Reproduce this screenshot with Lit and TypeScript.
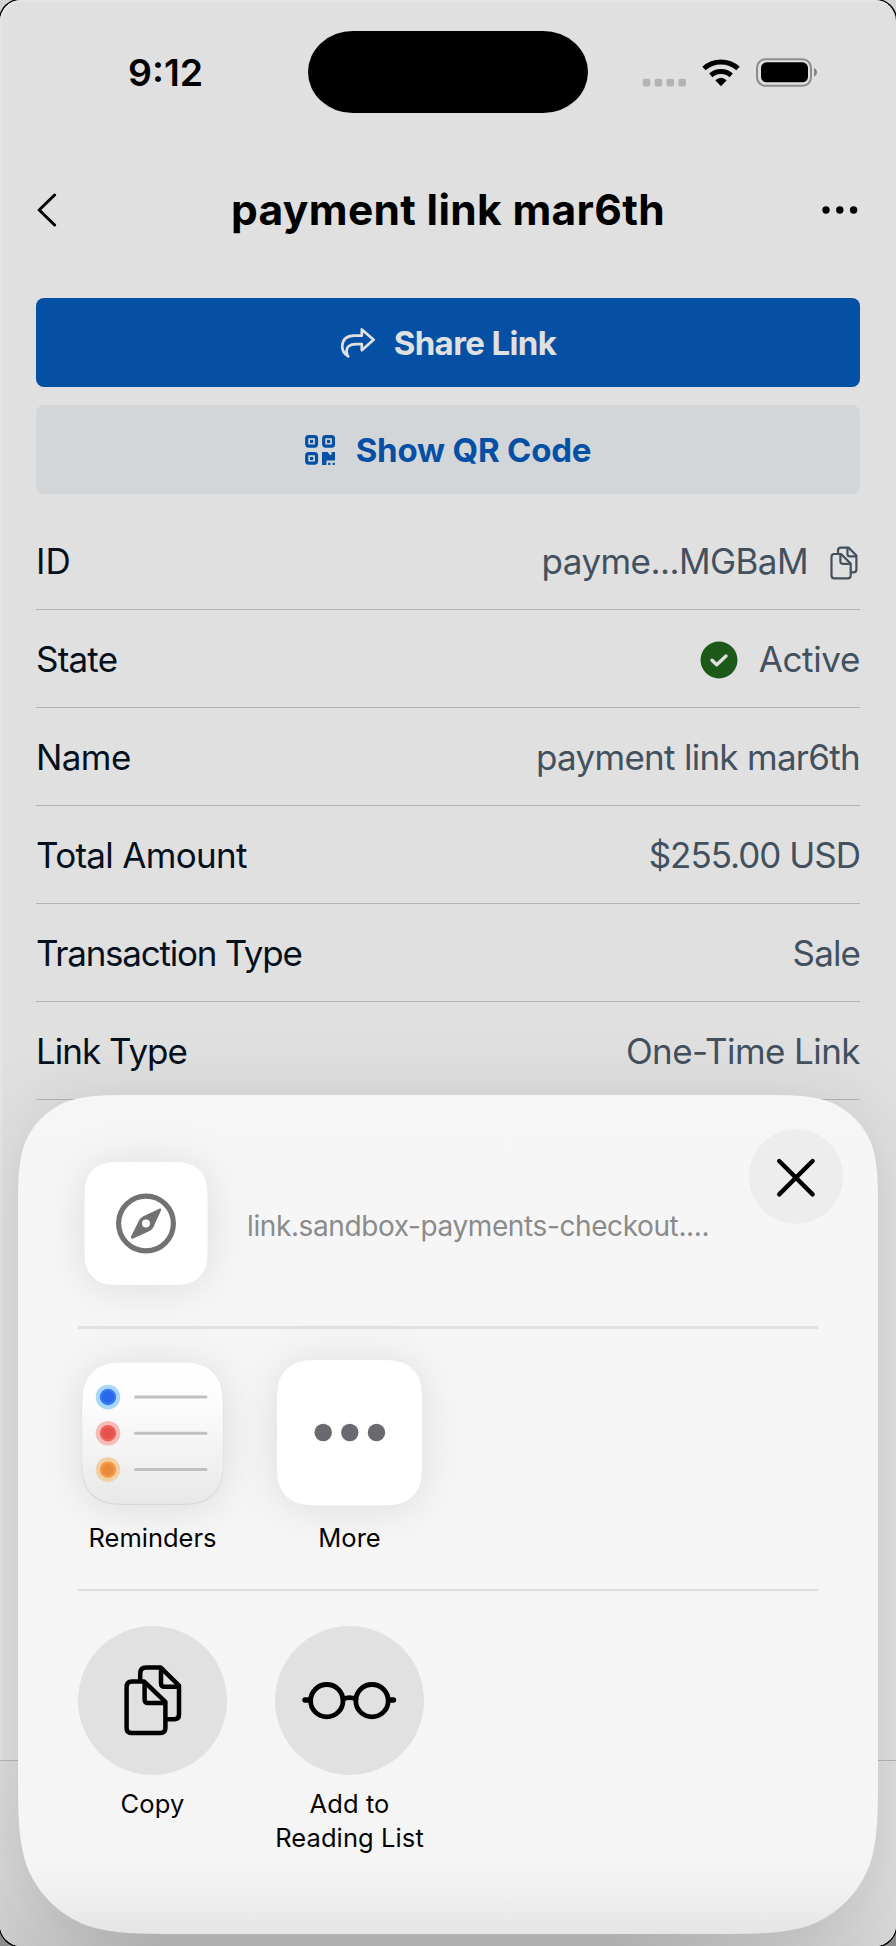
import { LitElement, html, svg, css } from "lit";
import { customElement } from "lit/decorators.js";

// Rounded rectangle whose corners ease into the straight edges.
function smoothRect(x: number, y: number, w: number, h: number, rt: number, rb = rt): string {
  const A = 1.52866, B = 1.08849, C = 0.86841, D = 0.63149, E = 0.07491, F = 0.37282, G = 0.16906;
  const r = x + w, b = y + h;
  return [
    `M${x + A * rt} ${y}H${r - A * rt}`,
    `C${r - B * rt} ${y} ${r - C * rt} ${y} ${r - D * rt} ${y + E * rt}`,
    `C${r - F * rt} ${y + G * rt} ${r - G * rt} ${y + F * rt} ${r - E * rt} ${y + D * rt}`,
    `C${r} ${y + C * rt} ${r} ${y + B * rt} ${r} ${y + A * rt}`,
    `V${b - A * rb}`,
    `C${r} ${b - B * rb} ${r} ${b - C * rb} ${r - E * rb} ${b - D * rb}`,
    `C${r - G * rb} ${b - F * rb} ${r - F * rb} ${b - G * rb} ${r - D * rb} ${b - E * rb}`,
    `C${r - C * rb} ${b} ${r - B * rb} ${b} ${r - A * rb} ${b}`,
    `H${x + A * rb}`,
    `C${x + B * rb} ${b} ${x + C * rb} ${b} ${x + D * rb} ${b - E * rb}`,
    `C${x + F * rb} ${b - G * rb} ${x + G * rb} ${b - F * rb} ${x + E * rb} ${b - D * rb}`,
    `C${x} ${b - C * rb} ${x} ${b - B * rb} ${x} ${b - A * rb}`,
    `V${y + A * rt}`,
    `C${x} ${y + B * rt} ${x} ${y + C * rt} ${x + E * rt} ${y + D * rt}`,
    `C${x + G * rt} ${y + F * rt} ${x + F * rt} ${y + G * rt} ${x + D * rt} ${y + E * rt}`,
    `C${x + C * rt} ${y} ${x + B * rt} ${y} ${x + A * rt} ${y}Z`,
  ].join("");
}

const copyIcon = html`<svg width="28" height="34" viewBox="0 0 28 34" fill="none" stroke="#43515f" stroke-width="2.2" stroke-linejoin="round">
  <path d="M8 7V4.5Q8 1.6 11 1.6H18.5L26.4 9.5V23.5Q26.4 26.3 23.5 26.3H21"/>
  <path d="M17.5 1.6V8Q17.5 10.3 19.8 10.3H26.4"/>
  <path d="M4.2 8H11L20.7 17.6V29.5Q20.7 32.4 17.8 32.4H4.4Q1.5 32.4 1.5 29.5V10.8Q1.5 8 4.2 8Z"/>
  <path d="M10.4 8V15.6Q10.4 17.8 12.6 17.8H20.7"/>
</svg>`;

const checkIcon = html`<svg width="38" height="38" viewBox="0 0 38 38">
  <circle cx="19" cy="19" r="18.5" fill="#1d5a1a"/>
  <path d="M12 19.3L16.7 23.8L26 15" fill="none" stroke="#e0e0e0" stroke-width="3.4" stroke-linecap="round" stroke-linejoin="round"/>
</svg>`;

const finder = (x: number, y: number) => svg`
  <rect x=${x + 1.7} y=${y + 1.7} width="9.8" height="9.4" rx="2" fill="none" stroke="#0550a5" stroke-width="3.2"/>
  <rect x=${x + 5} y=${y + 4.9} width="3.2" height="3.2" fill="#0550a5"/>`;

interface Detail {
  label: string;
  value: string;
  kind?: "copy" | "state";
  labelTrack: number;
  valueTrack: number;
}

const details: Detail[] = [
  { label: "ID", value: "payme...MGBaM", kind: "copy", labelTrack: 0.2, valueTrack: -0.57 },
  { label: "State", value: "Active", kind: "state", labelTrack: -0.8, valueTrack: -0.35 },
  { label: "Name", value: "payment link mar6th", labelTrack: -0.6, valueTrack: -0.72 },
  { label: "Total Amount", value: "$255.00 USD", labelTrack: -0.7, valueTrack: -1 },
  { label: "Transaction Type", value: "Sale", labelTrack: -1.25, valueTrack: -0.9 },
  { label: "Link Type", value: "One-Time Link", labelTrack: -1, valueTrack: -0.57 },
];

@customElement("detail-row")
class DetailRow extends LitElement {
  static properties = { detail: { attribute: false } };
  declare detail: Detail;
  static styles = css`
    :host { display: flex; box-sizing: border-box; height: 98px; align-items: center; justify-content: space-between;
      border-bottom: 1px solid #b3b3b3; font-size: 35px; color: #06101d; white-space: nowrap; }
    .value { display: flex; align-items: center; color: #43515f; }
    .check { display: flex; margin: 3px 21px 0 0; }
    .copy { display: flex; margin: 4px 2px 0 22px; }
  `;
  render() {
    const d = this.detail;
    return html`<span style="letter-spacing:${d.labelTrack}px">${d.label}</span>
      <span class="value">
        ${d.kind === "state" ? html`<span class="check">${checkIcon}</span>` : ""}
        <span style="letter-spacing:${d.valueTrack}px">${d.value}</span>
        ${d.kind === "copy" ? html`<span class="copy">${copyIcon}</span>` : ""}
      </span>`;
  }
}

@customElement("share-sheet")
class ShareSheet extends LitElement {
  static styles = css`
    :host { display: block; position: relative; width: 860px; height: 839px; color: #050505; }
    .bg { position: absolute; left: 0; top: 0; overflow: visible; filter: drop-shadow(0 6px 34px rgba(30, 20, 20, 0.13)); }
    svg { display: block; overflow: visible; }
    .body { position: relative; display: flex; flex-direction: column; padding: 0 60px; }
    .head { display: flex; height: 231px; align-items: flex-start; border-bottom: 3px solid #e1e1e1; }
    .thumb { margin: 67px 0 0 6px; }
    .soft { filter: drop-shadow(0 2px 20px rgba(0, 0, 0, 0.1)); }
    .url { margin: 114px 0 0 39px; width: 470px; line-height: 34px; font-size: 28px; color: #8b8b8b; letter-spacing: -0.39px; white-space: nowrap; }
    .close { margin: 34px -26px 0 auto; }
    .row { display: flex; gap: 48px; }
    .apps { height: 229px; padding-top: 31px; border-bottom: 2px solid #dedede; }
    .actions { padding-top: 35px; }
    .item { width: 149px; display: flex; flex-direction: column; align-items: center; font-size: 25.5px; line-height: 34.5px; text-align: center; white-space: nowrap; }
    .apps .label { margin-top: 16px; }
    .actions .label { margin-top: 12px; letter-spacing: 0.1px; line-height: 34px; }
  `;
  render() {
    return html`
      <svg class="bg" width="860" height="839">
        <defs><linearGradient id="s" x1="0" y1="0" x2="0" y2="1">
          <stop offset="0" stop-color="#f6f6f6"/><stop offset="0.91" stop-color="#f5f5f5"/>
          <stop offset="0.95" stop-color="#f0f0f0"/><stop offset="1" stop-color="#e5e5e5"/>
        </linearGradient></defs>
        <path d=${smoothRect(0, 0, 860, 839, 80, 110)} fill="url(#s)"/>
      </svg>
      <div class="body">
        <div class="head">
          <svg class="thumb" width="124" height="124">
            <path class="soft" d=${smoothRect(0.5, 0, 123, 123, 28)} fill="#fff"/>
            <circle cx="62" cy="61.5" r="27.4" fill="none" stroke="#727272" stroke-width="5.2"/>
            <path fill="#727272" fill-rule="evenodd" d="M75.3 46.7Q77.8 46 77 48.6L71 61.5Q69.3 67.5 64.5 69.6L49.2 76.5Q46.2 77.3 47 74.6L54 60.5Q55.3 56.3 58.8 54.4ZM62 57.6A4 4 0 1 0 62 65.6A4 4 0 1 0 62 57.6Z"/>
          </svg>
          <span class="url">link.sandbox-payments-checkout....</span>
          <svg class="close" width="95" height="95">
            <circle cx="47" cy="47.5" r="47.2" fill="#ededed"/>
            <path d="M30.2 32L63.6 65.4M63.6 32L30.2 65.4" stroke="#000" stroke-width="4.4" stroke-linecap="round"/>
          </svg>
        </div>
        <div class="row apps">
          <div class="item">
            <svg width="145" height="145">
              <defs><linearGradient id="r" x1="0" y1="0" x2="0" y2="1">
                <stop offset="0" stop-color="#fff"/><stop offset="0.3" stop-color="#fcfcfc"/><stop offset="1" stop-color="#e8e8e8"/>
              </linearGradient></defs>
              <path class="soft" d=${smoothRect(1.6, 3, 141.8, 142, 34)} fill="#d9d9d9"/>
              <path d=${smoothRect(2.1, 2.6, 140.8, 141.2, 34)} fill="url(#r)"/>
              ${[["#a9d7fb", "#3478f6", "#2b67ea"], ["#f5bcb8", "#ee6359", "#e4534a"], ["#f1d0a4", "#f09a48", "#e98a3b"]].map(
                ([halo, ring, core], i) => svg`
                <circle cx="28" cy=${37 + i * 36.3} r="12.3" fill=${halo}/>
                <circle cx="28" cy=${37 + i * 36.3} r="8.2" fill=${ring}/>
                <circle cx="28" cy=${37 + i * 36.3} r="5.8" fill=${core}/>
                <path d="M55.5 ${37 + i * 36.3}H126" stroke="#c0c0c0" stroke-width="3" stroke-linecap="round"/>`
              )}
            </svg>
            <span class="label">Reminders</span>
          </div>
          <div class="item">
            <svg width="145" height="145">
              <path class="soft" d=${smoothRect(0, 0, 145, 145.5, 32)} fill="#fff"/>
              ${[46.2, 72.8, 99.5].map((x) => svg`<circle cx=${x} cy="72.5" r="8.7" fill="#6a6970"/>`)}
            </svg>
            <span class="label">More</span>
          </div>
        </div>
        <div class="row actions">
          <div class="item">
            <svg width="149" height="149">
              <circle cx="74.5" cy="74.5" r="74.5" fill="#e1e1e1"/>
              <g fill="none" stroke="#000" stroke-width="4.5" stroke-linejoin="round">
                <path d="M62.2 54V47.4Q62.2 41.4 68.2 41.4H82.5L101 59.6V88.5Q101 93.2 96.3 93.2H89"/>
                <path d="M83 41.6V57.2Q83 60.7 86.5 60.7H100"/>
                <path d="M54 55.4H66L87.4 75.8V102Q87.4 107 82.4 107H53.3Q48.6 107 48.6 102V61Q48.6 55.4 54 55.4Z"/>
                <path d="M66.6 56V73.5Q66.6 77 70.1 77H87"/>
              </g>
            </svg>
            <span class="label">Copy</span>
          </div>
          <div class="item">
            <svg width="149" height="149">
              <circle cx="74.5" cy="74.5" r="74.5" fill="#e1e1e1"/>
              <g fill="none" stroke="#000" stroke-width="4.8" stroke-linecap="round">
                <circle cx="51.8" cy="74.7" r="16.2"/><circle cx="97" cy="74.7" r="16.2"/>
                <path d="M68 73Q74.5 70.3 81 73"/>
                <path d="M30 74H35M114 74H118.5" stroke-width="5.4"/>
              </g>
            </svg>
            <span class="label">Add to<br>Reading List</span>
          </div>
        </div>
      </div>`;
  }
}

@customElement("app-root")
class AppRoot extends LitElement {
  static styles = css`
    :host { display: block; position: relative; width: 896px; height: 1946px; overflow: hidden;
      background: linear-gradient(#d4d4d4 50%, #8c8c8c);
      font-family: Inter, "Liberation Sans", sans-serif; }
    svg { display: block; }
    .screen { box-sizing: border-box; width: 896px; height: 1946px; background: #e0e0e0; border-radius: 21px; overflow: hidden;
      box-shadow: 0 0 0 1.5px #000, inset 2px 2px 0 #e5e5e5; }
    .status { height: 144px; display: grid; grid-template-columns: 308px 280px 1fr; }
    .time { padding-left: 128px; line-height: 146px; font-size: 37.5px; font-weight: 600; }
    .island { height: 82px; margin-top: 31px; background: #000; border-radius: 45px / 41px; }
    .signals { display: flex; padding: 57px 0 0 54px; }
    .header { height: 131px; display: grid; grid-template-columns: 1fr auto 1fr; align-items: center; padding: 0 36px 0 36px; }
    .title { font-size: 42.5px; font-weight: 700; letter-spacing: 0.33px; white-space: nowrap; color: #000; }
    .dots { justify-self: end; }
    .content { display: flex; flex-direction: column; padding: 23px 36px 0; }
    .btn { display: flex; height: 89px; border-radius: 8px; margin-bottom: 18px; align-items: center; justify-content: center;
      font-size: 33px; font-weight: 700; white-space: nowrap; }
    .primary { background: #0550a5; color: #e0e0e0; gap: 19px; letter-spacing: -0.6px; }
    .secondary { background: #d2d6d9; color: #0550a5; gap: 21px; letter-spacing: -0.2px; }
    .footer { position: absolute; left: 0; right: 0; top: 1760px; height: 186px; border-top: 1px solid #b5b5b5; box-sizing: border-box;
      background: linear-gradient(90deg, rgba(222,222,222,.5), rgba(190,190,190,0) 18%, rgba(190,190,190,0) 68%, rgba(226,226,226,.7)),
        linear-gradient(#dadada, #cdcdcd 60%, #b9b9b9); border-radius: 0 0 21px 21px; }
    .sheet { position: absolute; left: 18px; top: 1095px; }
  `;
  render() {
    return html`
      <div class="screen">
        <div class="status">
          <div class="time">9:12</div>
          <div class="island"></div>
          <div class="signals">
            <svg width="180" height="32" viewBox="642 57 180 32">
              ${[642.7, 654.6, 666.5, 678.4].map((x) => svg`<rect x=${x} y="78.8" width="7.6" height="7.6" rx="2.2" fill="#b3b3b3"/>`)}
              <g fill="none" stroke="#000" stroke-width="5">
                <path d="M704 68.5A25.5 25.5 0 0 1 738 68.5"/>
                <path d="M710.8 75.3A15.5 15.5 0 0 1 731.2 75.3"/>
              </g>
              <path d="M721 86.2L715.3 80.3Q721 75.2 726.7 80.3Z"/>
              <rect x="757" y="59.2" width="54" height="26.6" rx="8.5" fill="none" stroke="#8c8c8c" stroke-width="2"/>
              <rect x="761" y="62.3" width="47" height="20" rx="5.5"/>
              <path d="M814 68Q817 69.3 817 72.2T814 76.4Z" fill="#858585"/>
            </svg>
          </div>
        </div>
        <div class="header">
          <svg width="22" height="34"><path d="M18.6 2L3.2 17L18.6 32" fill="none" stroke="#000" stroke-width="3" stroke-linecap="round" stroke-linejoin="round"/></svg>
          <span class="title">payment link mar6th</span>
          <svg class="dots" width="40" height="10"><circle cx="6" cy="5" r="3.7"/><circle cx="19.8" cy="5" r="3.7"/><circle cx="33.6" cy="5" r="3.7"/></svg>
        </div>
        <div class="content">
          <div class="btn primary">
            <svg width="35" height="32" viewBox="340 328 35 32" fill="none" stroke="#e0e0e0" stroke-width="2.7" stroke-linejoin="round" stroke-linecap="round">
              <path d="M361.8 330.4L373.6 340.7L361.8 351.2V345.1H356Q346.5 345.1 346.6 352.5Q346.7 355.5 348.2 357.4Q341.8 353.5 342.3 346.5Q343 337 354 336.6H361.8Z"/>
            </svg>
            <span>Share Link</span>
          </div>
          <div class="btn secondary">
            <svg width="30" height="30">
              ${finder(0, 0)}${finder(17, 0)}${finder(0, 17)}
              <path d="M17 17H22.5L25 20H26.5V17H30V25.5H21.5V30H17Z" fill="#0550a5"/>
              <path d="M23.2 27.8H25.4V30H23.2ZM27.6 27.8H29.8V30H27.6Z" fill="#0550a5"/>
            </svg>
            <span>Show QR Code</span>
          </div>
          ${details.map((d) => html`<detail-row .detail=${d}></detail-row>`)}
        </div>
        <div class="footer"></div>
        <share-sheet class="sheet"></share-sheet>
      </div>`;
  }
}
